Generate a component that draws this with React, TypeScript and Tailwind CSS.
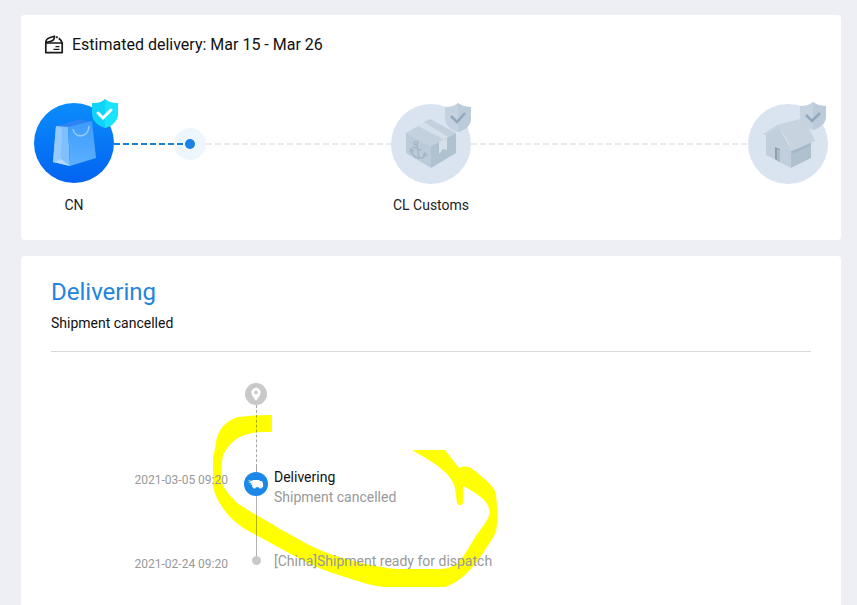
import React from 'react';

interface TrackEvent {
  date: string;
  title?: string;
  detail: string;
}

const current: TrackEvent = { date: '2021-03-05 09:20', title: 'Delivering', detail: 'Shipment cancelled' };
const dispatched: TrackEvent = { date: '2021-02-24 09:20', detail: '[China]Shipment ready for dispatch' };

const ParcelIcon = () => (
  <svg viewBox="0 0 20 20" className="w-5 h-5" fill="none" stroke="#1a1a1a" strokeWidth="1.7" strokeLinejoin="round">
    <path d="M1.8 8V17.6h16.4V8z" />
    <path d="M1.8 8C1.8 5 3 3.6 5.5 2.8L10.5 1.2C10.6 4.2 9.5 5.6 7 6.2L2.2 7.6M12 2.2l1.8.2M14.8 3.2C16.5 4.4 17.4 5.8 18.2 8" />
    <path d="M11.5 11.6h4M9.5 14.4h6" strokeWidth="1.3" />
  </svg>
);

const BagArt = () => (
  <svg viewBox="0 0 80 80" className="block w-20 h-20 overflow-visible">
    <defs>
      <linearGradient id="bagBg" x1="0" y1="0" x2="0" y2="1">
        <stop offset="0" stopColor="#0b8cfb" />
        <stop offset="1" stopColor="#0263f1" />
      </linearGradient>
      <linearGradient id="bagFront" x1="0" y1="0" x2="0" y2="1">
        <stop offset="0" stopColor="#3d9bfb" />
        <stop offset="1" stopColor="#5cb0ff" />
      </linearGradient>
    </defs>
    <circle cx="40" cy="39" r="40" fill="url(#bagBg)" />
    <path d="M22 22 46 15l12 3-23 8z" fill="#2a85f3" />
    <path d="M22 22 34 23 36 62 19 58z" fill="#7fbffd" />
    <path d="M22 22 28 24 27 55 19 58z" fill="#94cafe" />
    <path d="M27 55 36 62 19 58z" fill="#b4dafe" />
    <path d="M34 23 58 17 62 54 36 62z" fill="url(#bagFront)" />
    <path d="M39 25c1 10 16 9 16-3" fill="none" stroke="#8fc9ff" strokeWidth="1.6" />
    <path d="M71-5c4 4 8 4 13 4v10c0 8-6 13-13 15-7-2-13-7-13-15V-1c5 0 9 0 13-4z" fill="#10d3f7" />
    <path d="M71-5c4 4 8 4 13 4v10c0 8-6 13-13 15z" fill="#19e4fc" />
    <path d="m64 9 5 5 8-8" fill="none" stroke="#fff" strokeWidth="3" strokeLinecap="round" />
  </svg>
);

const CustomsArt = () => (
  <svg viewBox="0 0 80 80" className="block w-20 h-20 overflow-visible">
    <circle cx="40" cy="40" r="40" fill="#dae4f0" />
    <path d="M15 29 39 15 65 29 40 42z" fill="#d5e0eb" />
    <path d="M15 29 27 22 52 35 40 42z" fill="#c3d1de" />
    <path d="M33 18 39 15 65 29 57 33z" fill="#c3d1de" />
    <path d="M15 29 40 42V64L15 49z" fill="#bccbd9" />
    <path d="M40 42 65 29V49L40 64z" fill="#b0c1d0" />
    <path d="M48 38 56 34V46L52 45 48 50z" fill="#d5e0eb" />
    <g fill="none" stroke="#a6b7c7" strokeWidth="1.6">
      <circle cx="25" cy="39" r="1.8" />
      <path d="M26 41 28 54M22 43l8 3M20 45c0 5 4 9 8 9 3 1 6-1 6-4M19 48l1-3 3 2M32 51l2-2 2 3" />
    </g>
    <path d="M67-1c4 3 8 4 13 4v11c0 8-6 12-13 14-7-2-13-6-13-14V3c5 0 9-1 13-4z" fill="#c5d2df" />
    <path d="M67-1c4 3 8 4 13 4v11c0 8-6 12-13 14z" fill="#bccbd9" />
    <path d="m60 12 6 6 8-9" fill="none" stroke="#94a8bb" strokeWidth="2.6" />
  </svg>
);

const HouseArt = () => (
  <svg viewBox="0 0 80 80" className="block w-20 h-20 overflow-visible">
    <circle cx="40" cy="40" r="40" fill="#dae4f0" />
    <path d="M18 30 30 22 43 45V64L18 51z" fill="#c1cfdc" />
    <path d="M43 47 63 37V54L43 64z" fill="#afc0cf" />
    <path d="M43 47 63 37V41L44 50z" fill="#a4b6c7" />
    <path d="M15 30 29 21 56 14 67 37 44 47C41 39 37 30 30 24L17 31z" fill="#c7d4e0" />
    <path d="M27 43 32 45V58L27 55z" fill="#8c9eaf" />
    <path d="M29 45 32 46V58L29 56z" fill="#a9bac9" />
    <path d="M65-2c4 3 8 4 13 4v10c0 8-6 12-13 14-7-2-13-6-13-14V2c5 0 9-1 13-4z" fill="#c5d2df" />
    <path d="M65-2c4 3 8 4 13 4v10c0 8-6 12-13 14z" fill="#bccbd9" />
    <path d="m58 11 6 6 8-8" fill="none" stroke="#94a8bb" strokeWidth="2.6" />
  </svg>
);

const HighlightMark = () => (
  <svg viewBox="210 410 300 180" className="absolute left-[159px] top-[27px] w-[300px] h-[180px] pointer-events-none" fill="#ffff00" aria-hidden="true">
    <path d="M272 415C258 415 245 416 238 417 225 421 217 431 216 443 215 450 213 455 213 460V487C216 499 222 508 230 517 238 525 246 530 256 535L267 541 300 559C316 567 328 572 345 577 360 582 372 586 385 587H445C454 584 459 580 465 575 475 566 486 549 495 534 497 529 497 524 497 516 497 504 497 495 494 489 487 480 479 474 471 468 467 466 462 466 459 468L445 450H412C424 457 437 464 447 474 451 479 454 483 455 488L457 503C459 506 461 506 463 503V486C471 490 477 494 482 498 488 503 491 510 489 516 485 525 478 532 474 539 469 547 465 555 459 561 455 566 450 568 442 569H395C372 566 352 561 333 555 320 550 310 546 300 540L280 529C271 523 265 520 256 515L237 503C231 497 226 491 223 486 221 478 221 466 223 455 228 446 234 439 242 436 251 432 261 432 272 432z" />
  </svg>
);

const PendingLine = () => (
  <svg className="flex-1 min-w-0 h-[2px]">
    <line x1="0" y1="1" x2="100%" y2="1" stroke="#e8ebee" strokeWidth="2" strokeDasharray="6 3" />
  </svg>
);

const Step = ({ label, children }: { label?: string; children: React.ReactNode }) => (
  <li className="w-20 shrink-0">
    {children}
    <p className="mt-[11px] h-5 text-center text-sm leading-5 text-[#222] whitespace-nowrap">{label}</p>
  </li>
);

const App: React.FC = () => {
  return (
    <main className="min-h-screen flex flex-col gap-4 bg-[#eeeff4] pt-[15px] pl-[21px] pr-4 font-['Roboto','Noto_Sans',sans-serif] text-[#111]">
      <section className="bg-white rounded-sm pt-5 px-[13px] pb-[25px]">
        <h1 className="flex items-center gap-2 pl-[10px] text-base leading-5">
          <ParcelIcon />
          Estimated delivery: Mar 15 - Mar 26
        </h1>
        <ol className="mt-[49px] flex items-start">
          <Step label="CN"><BagArt /></Step>
          <li className="flex-1 min-w-0 h-20 flex items-center" aria-hidden="true">
            <svg className="w-[60px] h-[2px] shrink-0"><line x1="0" y1="1" x2="60" y2="1" stroke="#1b7fd6" strokeWidth="2" strokeDasharray="6 3" /></svg>
            <span className="w-8 h-8 shrink-0 rounded-full bg-[#eef6fd] flex items-center">
              <span className="ml-[3px] mr-[2px] w-[6px] h-[2px] bg-[#1b7fd6]" />
              <span className="w-[10px] h-[10px] rounded-full bg-[#1b82e0]" />
            </span>
            <PendingLine />
          </li>
          <Step label="CL Customs"><CustomsArt /></Step>
          <li className="flex-1 min-w-0 h-20 flex items-center" aria-hidden="true">
            <PendingLine />
          </li>
          <Step><HouseArt /></Step>
        </ol>
      </section>

      <section className="flex-1 bg-white rounded-t-sm px-[30px] pt-5">
        <h2 className="text-2xl leading-8 text-[#2384e0]">Delivering</h2>
        <p className="mt-1 pb-[17px] text-sm leading-[22px] border-b border-[#d9d9d9]">Shipment cancelled</p>

        <div className="relative mt-[31px]">
          <HighlightMark />
          <ol className="relative text-[#999]">
            <li className="flex h-[84px]">
              <div className="ml-[193px] w-6 flex flex-col items-center">
                <svg viewBox="0 0 22 22" className="w-[22px] h-[22px] shrink-0">
                  <circle cx="11" cy="11" r="11" fill="#c9c9c9" />
                  <path fillRule="evenodd" d="M11 4.8a4.6 4.6 0 0 0-4.6 4.6c0 3.2 4.6 8.3 4.6 8.3s4.6-5.1 4.6-8.3A4.6 4.6 0 0 0 11 4.8zm0 2.7a1.9 1.9 0 1 1 0 3.8 1.9 1.9 0 0 1 0-3.8z" fill="#fff" />
                </svg>
                <span className="flex-1 border-l border-dashed border-black/35" />
              </div>
            </li>
            <li className="flex h-[84px]">
              <time className="mt-[3px] w-[177px] text-right text-xs leading-5">{current.date}</time>
              <div className="ml-4 w-6 flex flex-col items-center">
                <span className="h-[5px] border-l border-dashed border-black/35" />
                <svg viewBox="0 0 24 24" className="w-6 h-6 shrink-0">
                  <circle cx="12" cy="12" r="12" fill="#1b87e8" />
                  <path d="M3.4 8.4 8.6 8.8V8h6.9v1.1H18l1.1 2.6v3.5h-1.3a1.4 1.4 0 0 1-2.8 0h-3.2a1.4 1.4 0 0 1-2.8 0H8.2v-2.4l-3-.9 2.7-.2-3.7-1.6 3.6.2z" fill="#fff" />
                </svg>
                <span className="flex-1 border-l border-black/30" />
              </div>
              <div className="ml-[6px] text-sm leading-5">
                <h3 className="text-[#111]">{current.title}</h3>
                <p>{current.detail}</p>
              </div>
            </li>
            <li className="flex">
              <time className="mt-[3px] w-[177px] text-right text-xs leading-5">{dispatched.date}</time>
              <div className="ml-4 w-6 flex flex-col items-center">
                <span className="h-[5px] border-l border-black/30" />
                <span className="w-[9px] h-[9px] rounded-full bg-[#c8c8c8]" />
              </div>
              <p className="ml-[6px] text-sm leading-5">{dispatched.detail}</p>
            </li>
          </ol>
        </div>
      </section>
    </main>
  );
};

export default App;
